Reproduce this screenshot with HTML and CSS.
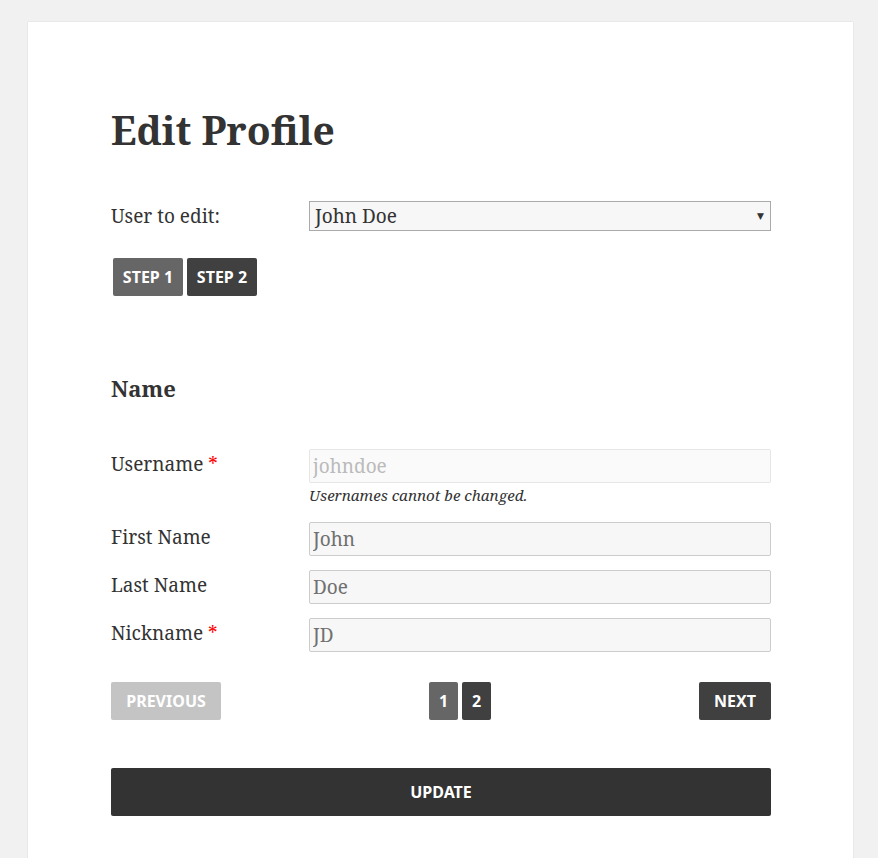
FILE: index.html
```html
<!DOCTYPE html>
<html lang="en">
<head>
	<meta charset="UTF-8">
	<title>Edit Profile</title>
	<link rel="stylesheet" href="styles.css">
</head>
<body>
	<div class="page">
		<h1 class="title">Edit Profile</h1>

		<div class="row user-row">
			<label class="label">User to edit:</label>
			<div class="field">
				<div class="select">John Doe<span class="arrow">&#9660;</span></div>
			</div>
		</div>

		<div class="steps">
			<span class="btn step active">Step 1</span>
			<span class="btn step">Step 2</span>
		</div>

		<h3 class="section">Name</h3>

		<div class="row">
			<label class="label">Username <span class="req">*</span></label>
			<div class="field">
				<input class="input" type="text" value="johndoe" disabled>
				<p class="desc">Usernames cannot be changed.</p>
			</div>
		</div>
		<div class="row">
			<label class="label">First Name</label>
			<div class="field"><input class="input" type="text" value="John"></div>
		</div>
		<div class="row">
			<label class="label">Last Name</label>
			<div class="field"><input class="input" type="text" value="Doe"></div>
		</div>
		<div class="row">
			<label class="label">Nickname <span class="req">*</span></label>
			<div class="field"><input class="input" type="text" value="JD"></div>
		</div>

		<div class="pager">
			<span class="btn prev">Previous</span>
			<div class="pages">
				<span class="btn num active">1</span>
				<span class="btn num">2</span>
			</div>
			<span class="btn next">Next</span>
		</div>

		<div class="btn update">Update</div>
	</div>
</body>
</html>
```

FILE: styles.css
```css
html,body{margin:0;padding:0;}
body{background:#f1f1f1;font-family:"Noto Serif","DejaVu Serif",serif;color:#333;padding-top:22px;}

.page{margin-left:28px;width:825px;min-height:836px;box-sizing:border-box;padding:85px 82px 0 83px;background:#fff;box-shadow:0 0 1px rgba(0,0,0,0.2);}

.title{margin:0 0 47px;font-size:39px;line-height:1.2;font-weight:700;color:#333;}

.row{display:flex;align-items:flex-start;margin-bottom:14px;}
.label{width:198px;flex:none;font-size:19px;line-height:30px;}
.field{flex:1;}
.req{color:#f00;}

.select{position:relative;height:30px;box-sizing:border-box;border:1px solid #aaa;background:#f7f7f7;font-size:19px;line-height:28px;padding:0 5px;}
.select .arrow{position:absolute;right:6px;top:0;font-size:9px;color:#333;}

.steps{display:flex;gap:4px;margin:27px 0 0 2px;}

.btn{display:inline-block;box-sizing:border-box;height:38px;line-height:38px;padding:0 10px;border-radius:2px;background:#404040;color:#fff;font-family:"Noto Sans","Open Sans",sans-serif;font-weight:700;font-size:16px;text-transform:uppercase;text-align:center;}
.btn.active{background:#666;}
.step{width:70px;padding:0;}

.section{margin:78px 0 47px;font-size:22px;font-weight:700;line-height:1.3;}

.input{display:block;width:100%;box-sizing:border-box;height:34px;border:1px solid #ccc;border-radius:2px;background:#f7f7f7;color:#707070;font-family:"Noto Serif","DejaVu Serif",serif;font-size:19px;padding:0 3px;margin:0;}
.input:disabled{background:#fafafa;border-color:#e6e6e6;color:#bbb;}
.desc{margin:2px 0 3px;font-size:15.2px;font-style:italic;color:#333;line-height:20px;}

.pager{display:flex;justify-content:space-between;align-items:center;margin-top:30px;}
.pages{display:flex;gap:4px;}
.prev{background:#c4c4c4;width:110px;padding:0;}
.num{width:29px;padding:0;}
.next{width:72px;padding:0;}

.update{display:block;margin-top:48px;height:48px;line-height:48px;background:#333;}
```
